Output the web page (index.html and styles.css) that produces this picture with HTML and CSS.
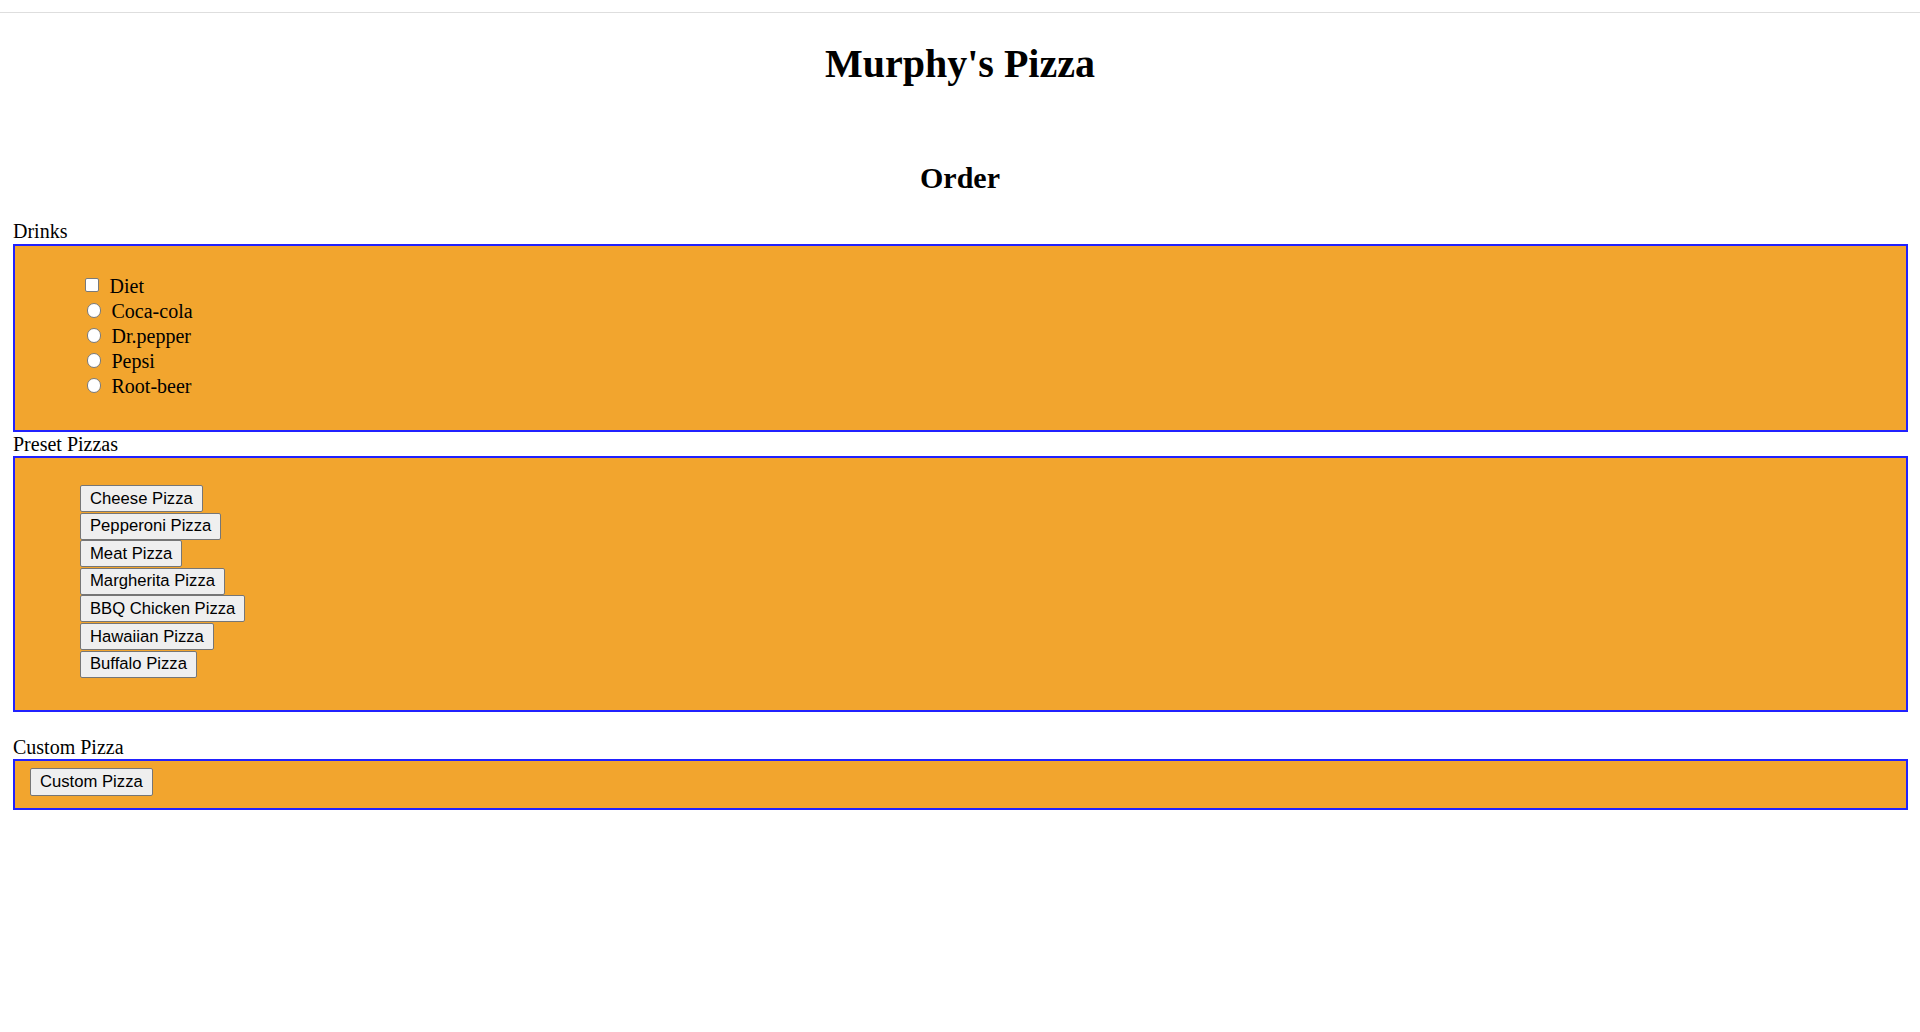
FILE: index.html
```html
<!DOCTYPE html>
<html lang="en">
<head>
<meta charset="utf-8">
<title>Murphy's Pizza</title>
<link rel="stylesheet" href="styles.css">
</head>
<body>
<div class="topbar"></div>
<h1 class="title">Murphy's Pizza</h1>
<h2 class="subtitle">Order</h2>

<div class="section-label section-label-first">Drinks</div>
<div class="panel panel-drinks">
  <ul class="drink-list">
    <li class="drink"><input class="check" type="checkbox"><span class="drink-name">Diet</span></li>
    <li class="drink"><input class="radio" type="radio" name="drink"><span class="drink-name">Coca-cola</span></li>
    <li class="drink"><input class="radio" type="radio" name="drink"><span class="drink-name">Dr.pepper</span></li>
    <li class="drink"><input class="radio" type="radio" name="drink"><span class="drink-name">Pepsi</span></li>
    <li class="drink"><input class="radio" type="radio" name="drink"><span class="drink-name">Root-beer</span></li>
  </ul>
</div>

<div class="section-label">Preset Pizzas</div>
<div class="panel panel-presets">
  <div class="preset-list">
    <button class="btn" type="button">Cheese Pizza</button>
    <button class="btn" type="button">Pepperoni Pizza</button>
    <button class="btn" type="button">Meat Pizza</button>
    <button class="btn" type="button">Margherita Pizza</button>
    <button class="btn" type="button">BBQ Chicken Pizza</button>
    <button class="btn" type="button">Hawaiian Pizza</button>
    <button class="btn" type="button">Buffalo Pizza</button>
  </div>
</div>

<div class="section-label section-label-spaced">Custom Pizza</div>
<div class="panel panel-custom">
  <button class="btn" type="button">Custom Pizza</button>
</div>
</body>
</html>
```

FILE: styles.css
```css
html, body {
  margin: 0;
  padding: 0;
  background: #ffffff;
}

body {
  font-family: "Liberation Serif", "Times New Roman", serif;
  font-size: 20px;
  color: #000000;
}

.topbar {
  height: 12px;
  border-bottom: 1px solid #dedede;
}

.title {
  margin: 28px 0 0;
  font-size: 40px;
  line-height: 46px;
  font-weight: bold;
  text-align: center;
}

.subtitle {
  margin: 74px 0 0;
  font-size: 30px;
  line-height: 34px;
  font-weight: bold;
  text-align: center;
}

.section-label {
  margin: 0 0 0 13px;
  line-height: 24px;
  height: 24px;
}

.section-label-first {
  margin-top: 23.5px;
}

.section-label-spaced {
  margin-top: 23px;
}

.panel {
  margin: 0 12px 0 13px;
  border: 2px solid #2121ff;
  background: #f2a52e;
}

.panel-drinks {
  margin-top: 1px;
  padding: 28.5px 15px 31px;
}

.drink-list {
  list-style: none;
  margin: 0;
  padding: 0 0 0 50px;
}

.drink {
  display: flex;
  align-items: flex-start;
  height: 25px;
  line-height: 25px;
}

.check,
.radio {
  -webkit-appearance: none;
  appearance: none;
  box-sizing: border-box;
  width: 14px;
  height: 14px;
  margin: 4px 0 0;
  padding: 0;
  background: #ffffff;
  border: 1px solid #7a7a7a;
}

.check {
  margin-left: 5px;
  border-radius: 2px;
}

.radio {
  margin-left: 6.5px;
  width: 14.5px;
  height: 14.5px;
  border-radius: 50%;
}

.drink-name {
  margin-left: 10.5px;
}

.panel-presets {
  padding: 27.3px 15px 32.4px;
}

.preset-list {
  display: flex;
  flex-direction: column;
  align-items: flex-start;
  padding-left: 50px;
}

.preset-list .btn {
  margin-bottom: 0.55px;
}

.preset-list .btn:last-child {
  margin-bottom: 0;
}

.btn {
  box-sizing: border-box;
  height: 27px;
  margin: 0;
  padding: 0 9px;
  font-family: "Liberation Sans", Arial, sans-serif;
  font-size: 16.67px;
  line-height: 24px;
  color: #000000;
  background: #efefef;
  border: 1px solid #767676;
  border-radius: 2px;
  white-space: nowrap;
}

.panel-custom {
  padding: 7.3px 15px 12.8px;
}

.panel-custom .btn {
  height: 27.4px;
  display: block;
}
```
